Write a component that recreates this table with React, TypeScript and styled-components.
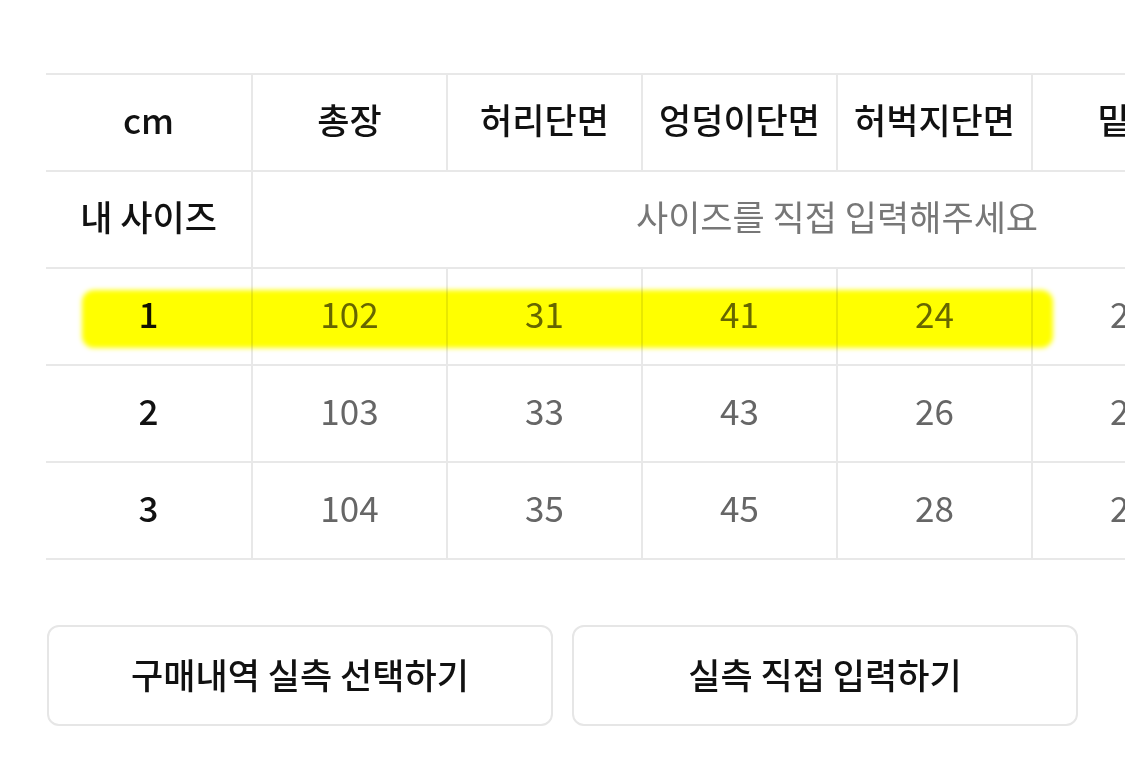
import React from "react";
import styled, { createGlobalStyle } from "styled-components";

const Global = createGlobalStyle`
  html, body { margin: 0; padding: 0; background: #ffffff; }
  body { font-family: "Noto Sans CJK KR", "Noto Sans", sans-serif; }
  * { box-sizing: border-box; }
`;

const Page = styled.div`
  width: 1125px;
  height: 778px;
  overflow: hidden;
  padding: 73px 0 0 46px;
  display: flex;
  flex-direction: column;
`;

const TableScroll = styled.div`
  position: relative;
  width: 1079px;
  overflow: hidden;
`;

const Grid = styled.div`
  display: grid;
  grid-template-columns: 207px repeat(6, 195px);
  grid-auto-rows: 97px;
  width: max-content;
  border-top: 2px solid #e8e8e8;
`;

const Cell = styled.div<{ $head?: boolean; $muted?: boolean; $span?: number }>`
  display: flex;
  align-items: center;
  justify-content: center;
  padding-bottom: 9px;
  border-right: 2px solid #e8e8e8;
  border-bottom: 2px solid #e8e8e8;
  font-size: 35px;
  line-height: 1;
  font-weight: ${(p) => (p.$head ? 500 : 400)};
  color: ${(p) => (p.$head ? "#111111" : p.$muted ? "#777777" : "#666666")};
  grid-column: ${(p) => (p.$span ? `span ${p.$span}` : "auto")};
  white-space: nowrap;
`;

const Highlight = styled.div`
  position: absolute;
  left: 36px;
  top: 217px;
  width: 971px;
  height: 58px;
  border-radius: 12px;
  background: #ffff00;
  filter: blur(2.5px);
  mix-blend-mode: multiply;
  pointer-events: none;
`;

const Buttons = styled.div`
  display: flex;
  gap: 19px;
  margin-top: 65px;
  padding-left: 1px;
`;

const Button = styled.button`
  width: 506px;
  height: 101px;
  border: 2px solid #e6e6e6;
  border-radius: 12px;
  background: #ffffff;
  font-family: "Noto Sans CJK KR", "Noto Sans", sans-serif;
  font-size: 35px;
  font-weight: 500;
  color: #111111;
  display: flex;
  align-items: center;
  justify-content: center;
  padding: 0 0 5px;
`;

const headers = ["총장", "허리단면", "엉덩이단면", "허벅지단면", "밑위", "밑단단면"];
const rows: { size: string; values: string[] }[] = [
  { size: "1", values: ["102", "31", "41", "24", "27", "18"] },
  { size: "2", values: ["103", "33", "43", "26", "28", "19"] },
  { size: "3", values: ["104", "35", "45", "28", "29", "20"] },
];

export default function App() {
  return (
    <>
      <Global />
      <Page>
        <TableScroll>
          <Grid>
            <Cell $head>cm</Cell>
            {headers.map((h) => (
              <Cell $head key={h}>
                {h}
              </Cell>
            ))}
            <Cell $head>내 사이즈</Cell>
            <Cell $muted $span={6}>
              사이즈를 직접 입력해주세요
            </Cell>
            {rows.map((r) => (
              <React.Fragment key={r.size}>
                <Cell $head>{r.size}</Cell>
                {r.values.map((v, i) => (
                  <Cell key={i}>{v}</Cell>
                ))}
              </React.Fragment>
            ))}
          </Grid>
          <Highlight />
        </TableScroll>
        <Buttons>
          <Button>구매내역 실측 선택하기</Button>
          <Button>실측 직접 입력하기</Button>
        </Buttons>
      </Page>
    </>
  );
}
